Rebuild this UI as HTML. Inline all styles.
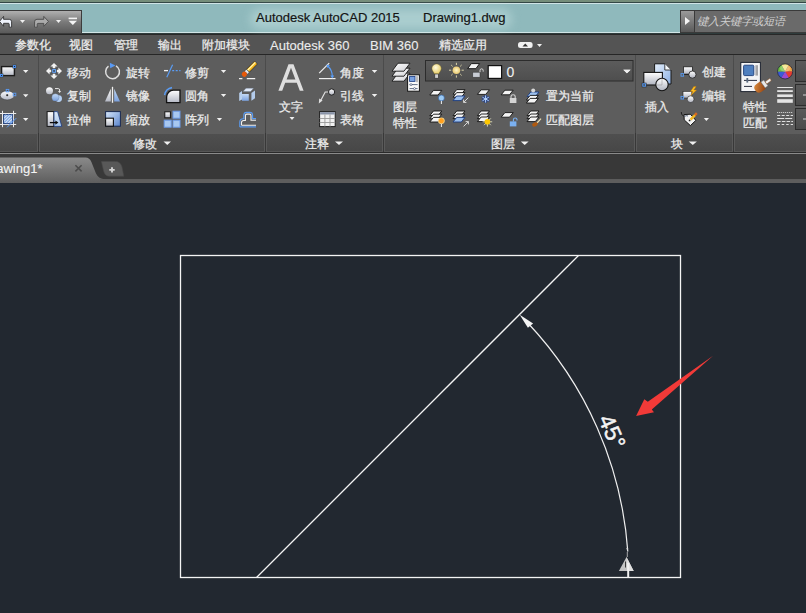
<!DOCTYPE html>
<html><head><meta charset="utf-8">
<style>
*{margin:0;padding:0;box-sizing:border-box}
html,body{width:806px;height:613px;overflow:hidden;background:#222830;font-family:"Liberation Sans",sans-serif}
.a{position:absolute}
.t{position:absolute;z-index:5;white-space:nowrap;color:#ececec;-webkit-text-stroke:0.25px currentColor;font-size:12px;line-height:14px}
#title{left:0;top:0;width:806px;height:35px;background:#8fb9bc}
#tabs{left:0;top:35px;width:806px;height:20px;background:#545454}
#panels{left:0;top:55px;width:806px;height:98px;background:#5d5d5d}
.strip{top:134px;height:18px;background:linear-gradient(#4f4f4f,#474747);border-left:1px solid #5a5a5a;border-right:1px solid #5a5a5a;border-bottom:1px solid #565656}
.sep{top:55px;width:1px;height:97px;background:linear-gradient(#4c4c4c,#444 80%,#383838 80%)}
.tri{position:absolute;width:0;height:0;border-left:3px solid transparent;border-right:3px solid transparent;border-top:3px solid #e0e0e0}
</style></head><body>
<!-- title bar -->
<div class="a" id="title"></div>
<div class="a" style="left:0;top:0;width:806px;height:2px;background:#758d7a"></div>
<div class="a" style="left:0;top:2px;width:806px;height:1px;background:#344745"></div>
<div class="a" style="left:0;top:3px;width:806px;height:1px;background:#d0e4e6"></div>
<div class="a" style="left:0;top:32px;width:806px;height:1px;background:#d2e5e6"></div>
<div class="a" style="left:0;top:33px;width:806px;height:1px;background:#2f3c3c"></div>
<div class="a" style="left:0;top:34px;width:806px;height:1px;background:#282828"></div>
<div class="a" style="left:250px;top:9px;width:262px;height:20px;border-radius:10px;background:rgba(205,230,230,0.45);filter:blur(5px)"></div>
<div class="t" style="left:256px;top:10px;font-size:13px;line-height:16px;color:#141414;-webkit-text-stroke:0.2px #141414">Autodesk AutoCAD 2015</div>
<div class="t" style="left:423px;top:10px;font-size:13px;line-height:16px;color:#141414;-webkit-text-stroke:0.2px #141414">Drawing1.dwg</div>

<!-- QAT -->
<div class="a" style="left:-1px;top:10px;width:83px;height:24px;border:1px solid #3c3c3c;background:linear-gradient(#b0b0b0,#7a7a7a 50%,#5a5a5a)"></div>

<!-- search -->
<div class="a" style="left:680px;top:10px;width:130px;height:23px;background:#3a3a3a"></div>
<div class="a" style="left:681px;top:11px;width:13px;height:21px;background:linear-gradient(#9a9a9a,#5a5a5a)"></div>
<div class="a" style="left:695px;top:11px;width:115px;height:21px;background:#6a6a6a"></div>
<div class="t" style="left:697px;top:14px;font-size:11.25px;font-style:italic;color:#cfcfcf;-webkit-text-stroke:0">键入关键字或短语</div>
<div class="a" style="left:685px;top:17px;width:0;height:0;border-top:4px solid transparent;border-bottom:4px solid transparent;border-left:5px solid #f4f4f4"></div>

<!-- ribbon tabs -->
<div class="a" id="tabs"></div>
<div class="a" style="left:0;top:54px;width:806px;height:1px;background:#262626"></div>
<div class="t" style="left:15px;top:38px">参数化</div>
<div class="t" style="left:69px;top:38px">视图</div>
<div class="t" style="left:114px;top:38px">管理</div>
<div class="t" style="left:158px;top:38px">输出</div>
<div class="t" style="left:202px;top:38px">附加模块</div>
<div class="t" style="left:270px;top:38px;font-size:13px;line-height:16px;-webkit-text-stroke:0.1px currentColor">Autodesk 360</div>
<div class="t" style="left:370px;top:38px;font-size:13px;line-height:16px;-webkit-text-stroke:0.1px currentColor">BIM 360</div>
<div class="t" style="left:439px;top:38px">精选应用</div>

<!-- panels -->
<div class="a" id="panels"></div>
<div class="a strip" style="left:-1px;width:39px"></div>
<div class="a strip" style="left:39px;width:226px"></div>
<div class="a strip" style="left:266px;width:117px"></div>
<div class="a strip" style="left:384px;width:251px"></div>
<div class="a strip" style="left:636px;width:97px"></div>
<div class="a strip" style="left:734px;width:76px"></div>

<div class="a" style="left:0;top:152px;width:806px;height:1px;background:#2a2a2a"></div>
<div class="a" style="left:0;top:153px;width:806px;height:1px;background:#8a8a8a"></div>
<div class="a sep" style="left:38px"></div>
<div class="a sep" style="left:265px"></div>
<div class="a sep" style="left:383px"></div>
<div class="a sep" style="left:635px"></div>
<div class="a sep" style="left:733px"></div>


<!-- panel labels -->
<div class="t" style="left:67px;top:66px">移动</div>
<div class="t" style="left:67px;top:89px">复制</div>
<div class="t" style="left:67px;top:113px">拉伸</div>
<div class="t" style="left:126px;top:66px">旋转</div>
<div class="t" style="left:126px;top:89px">镜像</div>
<div class="t" style="left:126px;top:113px">缩放</div>
<div class="t" style="left:185px;top:66px">修剪</div>
<div class="t" style="left:185px;top:89px">圆角</div>
<div class="t" style="left:185px;top:113px">阵列</div>
<div class="t" style="left:133px;top:137px">修改</div>
<div class="t" style="left:279px;top:100px">文字</div>
<div class="t" style="left:340px;top:66px">角度</div>
<div class="t" style="left:340px;top:89px">引线</div>
<div class="t" style="left:340px;top:113px">表格</div>
<div class="t" style="left:305px;top:137px">注释</div>
<div class="t" style="left:393px;top:100px">图层</div>
<div class="t" style="left:393px;top:116px">特性</div>
<div class="t" style="left:546px;top:89px">置为当前</div>
<div class="t" style="left:546px;top:113px">匹配图层</div>
<div class="t" style="left:491px;top:137px">图层</div>
<div class="t" style="left:645px;top:100px">插入</div>
<div class="t" style="left:702px;top:65px">创建</div>
<div class="t" style="left:702px;top:89px">编辑</div>
<div class="t" style="left:671px;top:137px">块</div>
<div class="t" style="left:743px;top:100px">特性</div>
<div class="t" style="left:743px;top:116px">匹配</div>
<svg class="a" style="left:0;top:0;z-index:4" width="320" height="100"><path fill-rule="evenodd" fill="#dedede" d="M288.5,64.2 H293.5 L303.6,90.8 H299.8 L296.8,82.8 H285.2 L282.2,90.8 H278.4 Z M291,67.8 L295.4,79.4 H286.6 Z"/></svg>

<div class="t" style="left:506.5px;top:63.5px;font-size:14px;line-height:16px;color:#f0f0f0;-webkit-text-stroke:0.1px currentColor">0</div>
<!-- doc tab bar -->
<div class="t" style="left:-17.5px;top:161px;font-size:13px;line-height:16px;color:#f4f4f4;-webkit-text-stroke:0.1px currentColor">Drawing1*</div>
<div class="a" style="left:0;top:154px;width:806px;height:29px;background:#383838"></div>

<!-- canvas -->
<svg class="a" style="left:0;top:183px" width="806" height="430" viewBox="0 183 806 430">
<rect x="180.5" y="255.5" width="500" height="322" fill="none" stroke="#f4f4f4" stroke-width="1.3"/>
<line x1="256.5" y1="577.5" x2="578.5" y2="255.5" stroke="#f4f4f4" stroke-width="1.3"/>
<path d="M526.9,322.0 A371.5,371.5 0 0 1 627.8,551.5" fill="none" stroke="#f0f0f0" stroke-width="1.2"/>
<polygon points="519.7,314.7 533.1,323.5 527.9,327.8" fill="#f4f4f4"/>
<polygon points="626.4,548 628.2,548 627.3,552" fill="#e0e0e0"/>
<path d="M627.3,552 V557" stroke="#c8c8c8" stroke-width="0.8"/>
<polygon points="626.5,557 633.7,571 618.9,571" fill="#c4c4c4"/><polygon points="626.5,557 633.7,571 627,571" fill="#e0e0e0"/>
<path d="M628.2,563 V577" stroke="#f0f0f0" stroke-width="2"/>
<path d="M625.5,561.5 V567.5" stroke="#3a3a3a" stroke-width="1"/>
<text x="0" y="0" transform="translate(598,419) rotate(66)" letter-spacing="0.4" font-family="Liberation Sans" font-size="22.5" stroke="#f4f4f4" stroke-width="0.5" transform-origin="0 0" fill="#f4f4f4">45°</text>
<polygon points="713.1,355.7 651.8,409.6 654,412.2 636.1,415.9 644.3,399.2 647.8,401.8" fill="#f23a38"/>
</svg>
<!--ICONS-->
<svg class="a" style="left:0;top:0" width="806" height="183" viewBox="0 0 806 183">
<defs>
<linearGradient id="mw" x1="0" y1="0" x2="0" y2="1"><stop offset="0" stop-color="#ffffff"/><stop offset="1" stop-color="#b0b4c0"/></linearGradient>
<linearGradient id="mb" x1="0" y1="0" x2="1" y2="1"><stop offset="0" stop-color="#e4eefa"/><stop offset="1" stop-color="#8cb0e4"/></linearGradient>
<linearGradient id="mbr" x1="0" y1="0" x2="1" y2="1"><stop offset="0" stop-color="#e09040"/><stop offset="1" stop-color="#904010"/></linearGradient>
<linearGradient id="mdd" x1="0" y1="0" x2="0" y2="1"><stop offset="0" stop-color="#5a5a5a"/><stop offset="1" stop-color="#4a4a4a"/></linearGradient>
</defs>
<!-- insert big -->
<path d="M654.6,63.8 H664.8 L671,70 V84 H654.6 Z" fill="url(#mb)" stroke="#181818" stroke-width="1"/>
<path d="M664.8,63.8 V70 H671" fill="#f4f8fc" stroke="#181818" stroke-width="0.8"/>
<rect x="643.8" y="72.4" width="18.6" height="12.6" fill="url(#mw)" stroke="#141414" stroke-width="1.1"/>
<circle cx="662" cy="84.5" r="6.2" fill="url(#mw)" stroke="#141414" stroke-width="1.1"/>
<path d="M662,78.6 V85 H656" stroke="#9a9aa0" stroke-width="0.6" fill="none"/>
<rect x="642" y="83" width="4.2" height="4" fill="#5a9cf4" stroke="#202020" stroke-width="0.5"/>
<rect x="643.4" y="84.3" width="1.4" height="1.4" fill="#3a3020"/>
<!-- create block -->
<rect x="683.4" y="66.8" width="9" height="7.4" fill="url(#mw)" stroke="#202020" stroke-width="0.8"/>
<circle cx="692.4" cy="74.6" r="3.6" fill="url(#mw)" stroke="#202020" stroke-width="0.8"/>
<path d="M683.4,74.4 H688.8" stroke="#202020" stroke-width="0.9"/>
<rect x="681" y="73.6" width="2.6" height="2.6" fill="none" stroke="#5a9cf4" stroke-width="0.9"/>
<!-- edit block -->
<rect x="683" y="91.4" width="8.8" height="6.6" fill="url(#mw)" stroke="#202020" stroke-width="0.6"/>
<circle cx="690.6" cy="99.2" r="3.4" fill="url(#mw)" stroke="#202020" stroke-width="0.6"/>
<rect x="681" y="96.4" width="2.6" height="2.6" fill="none" stroke="#5a9cf4" stroke-width="0.9"/>
<polygon points="693.8,86.6 690.4,91.6 692.8,91.6 690.8,95.6 696.6,90 693.8,90 696.2,86.6" fill="#ffc020" stroke="#c07000" stroke-width="0.4"/>
<!-- attribute -->
<path d="M681.3,112 Q681,115 683.6,116" stroke="#1a1a1a" stroke-width="0.9" fill="none"/>
<polygon points="684,114.6 690.4,114.2 695.9,120.4 690.4,125.6 684.2,119.9" fill="#f2f2f2" stroke="#141414" stroke-width="1"/>
<path d="M684.6,116.4 Q686,115.2 688,116" stroke="#3a4a6a" stroke-width="0.8" fill="none"/>
<circle cx="689.6" cy="120.4" r="0.9" fill="#222"/>
<path d="M690.6,119.6 L695.2,114.8" stroke="#f4b820" stroke-width="2.4"/>
<path d="M694.8,115.2 L696.8,113.2" stroke="#d86a20" stroke-width="2.4"/>
<!-- match properties -->
<rect x="740.8" y="62.4" width="19.6" height="29.2" fill="#f4f4f6" stroke="#1e2430" stroke-width="1"/>
<rect x="743.6" y="65.2" width="10.2" height="10.4" rx="1" fill="#4f7fbf" stroke="#1a3a78" stroke-width="0.9"/>
<rect x="755.4" y="65.2" width="2.6" height="10.4" fill="#a4a4a8"/>
<path d="M744,80.4 H757 M744,86.4 H752" stroke="#2a3040" stroke-width="1"/>
<rect x="746.4" y="78" width="1.8" height="4.6" fill="#5a6a80"/>
<g transform="translate(763,85) rotate(-36)">
<path d="M-9.5,0 Q-9.5,-4.6 -5,-4.6 H0 V4.6 H-5 Q-9.5,4.6 -9.5,0 Z" fill="url(#mbr)"/>
<rect x="0" y="-3.6" width="3.6" height="7.2" fill="#e8e8e8" stroke="#555" stroke-width="0.4"/>
<path d="M3.6,-1.4 H8.6 Q9.6,-1.4 9.6,0 Q9.6,1.4 8.6,1.4 H3.6 Z" fill="#f0f0f0" stroke="#8a5020" stroke-width="0.5"/>
</g>
<!-- color wheel -->
<g transform="translate(785.1,71.4)">
<path d="M0,0 L-3.80,-6.58 A7.6,7.6 0 0 1 3.80,-6.58 Z" fill="#f2e27a"/>
<path d="M0,0 L3.80,-6.58 A7.6,7.6 0 0 1 7.60,0.00 Z" fill="#f0a444"/>
<path d="M0,0 L7.60,0.00 A7.6,7.6 0 0 1 3.80,6.58 Z" fill="#e83a30"/>
<path d="M0,0 L3.80,6.58 A7.6,7.6 0 0 1 -3.80,6.58 Z" fill="#9a4ad0"/>
<path d="M0,0 L-3.80,6.58 A7.6,7.6 0 0 1 -7.60,0.00 Z" fill="#3a5ad8"/>
<path d="M0,0 L-7.60,0.00 A7.6,7.6 0 0 1 -3.80,-6.58 Z" fill="#6ec040"/>
<circle r="7.6" fill="none" stroke="#2a3040" stroke-width="0.9"/>
<ellipse cx="0" cy="-3" rx="5" ry="3.5" fill="#fff" opacity="0.25"/>
</g>
<!-- lineweight -->
<g fill="#e4e4e4">
<rect x="777.2" y="87" width="15.6" height="1"/>
<rect x="777.2" y="90.2" width="15.6" height="1.8"/>
<rect x="777.2" y="94.4" width="15.6" height="2.6"/>
<rect x="777.2" y="99.2" width="15.6" height="3.6"/>
</g>
<!-- linetype -->
<g stroke="#e0e0e0" stroke-width="1">
<path d="M777.2,112.5 H793" stroke-dasharray="1,1"/>
<path d="M777.2,115.5 H793" stroke-dasharray="3,1.5"/>
<path d="M777.2,118.5 H793" stroke-dasharray="7,1"/>
<path d="M777.2,121.5 H793" stroke-dasharray="3.5,1.2"/>
<path d="M777.2,124.5 H793" stroke-dasharray="2.5,2"/>
</g>
<!-- dropdowns -->
<rect x="795.5" y="60.5" width="14" height="21" fill="url(#mdd)" stroke="#2c2c2c"/>
<rect x="795.5" y="84.5" width="14" height="21" fill="url(#mdd)" stroke="#2c2c2c"/>
<rect x="795.5" y="108.5" width="14" height="21" fill="url(#mdd)" stroke="#2c2c2c"/>
<path d="M803,95 H806 M803,119 H806" stroke="#d0d0d0" stroke-width="1"/>
<!-- doc tabs -->
<path d="M-2,183 V160.4 Q-2,157.4 1,157.4 H85.6 Q89.6,157.4 91.4,162 L96,173.6 Q98.6,179.2 105,179.2 H806 V183 Z" fill="url(#gtab2)"/>
<linearGradient id="gtab2" x1="0" y1="0" x2="0" y2="1"><stop offset="0" stop-color="#8a8a8a"/><stop offset="1" stop-color="#5e5e5e"/></linearGradient>
<rect x="100" y="179.2" width="706" height="3.8" fill="#5e5e5e"/>
<path d="M101.4,161.4 H115.6 Q120.4,161.4 122,167 L123.8,176.2 H109 Q104.6,176.2 103.4,170 Z" fill="#585858" stroke="#4a4a4a" stroke-width="0.6"/>
<path d="M112,167.2 V172.6 M109.3,169.9 H114.7" stroke="#d4d4d4" stroke-width="1.9"/>
<path d="M75.4,165.2 L81.6,171.4 M81.6,165.2 L75.4,171.4" stroke="#4c4c4c" stroke-width="1.5"/>
</svg>

<svg class="a" style="left:0;top:0" width="806" height="183" viewBox="0 0 806 183">
<defs>
<linearGradient id="kw" x1="0" y1="0" x2="0" y2="1"><stop offset="0" stop-color="#ffffff"/><stop offset="1" stop-color="#b4b8c4"/></linearGradient>
<linearGradient id="kb" x1="0" y1="0" x2="0" y2="1"><stop offset="0" stop-color="#d4e4f8"/><stop offset="1" stop-color="#88acdf"/></linearGradient>
<linearGradient id="kcombo" x1="0" y1="0" x2="0" y2="1"><stop offset="0" stop-color="#5c5c5c"/><stop offset="1" stop-color="#4e4e4e"/></linearGradient>
<radialGradient id="ksun" cx="0.5" cy="0.5" r="0.5"><stop offset="0" stop-color="#fff6c8"/><stop offset="1" stop-color="#e8c870"/></radialGradient>
<radialGradient id="kbulb" cx="0.4" cy="0.35" r="0.6"><stop offset="0" stop-color="#fffbe0"/><stop offset="1" stop-color="#e8d070"/></radialGradient>
<polygon id="s1" points="3.7,0 12,0 8.3,4.6 0,4.6" fill="#f4f4f4" stroke="#121212" stroke-width="0.9"/>
<polygon id="s2" points="3.7,0 12,0 8.3,4.6 0,4.6" fill="#9cc0ee" stroke="#1a3a80" stroke-width="0.9"/>
</defs>
<!-- angle -->
<path d="M319,78.6 H335.5" stroke="#f0f0f0" stroke-width="1.2"/>
<path d="M319.2,73.2 L329.2,63.2" stroke="#f0f0f0" stroke-width="1.2"/>
<path d="M327.5,65.8 Q332.3,70 332.3,76.5" stroke="#5a9cf4" stroke-width="1.2" fill="none"/>
<polygon points="326.5,64.5 330,65.5 327.2,68" fill="#5a9cf4"/>
<polygon points="330.4,75.5 334.2,75.5 332.3,78.4" fill="#5a9cf4"/>
<!-- leader -->
<path d="M328.6,92 H325.2 L320.2,101.5" stroke="#e0e0e0" stroke-width="1.2" fill="none"/>
<polygon points="318.8,103.6 319.2,98.6 322.6,100.4" fill="#e0e0e0"/>
<circle cx="331.6" cy="92" r="3.1" fill="url(#kw)" stroke="#1a1a1a" stroke-width="0.9"/>
<!-- table -->
<rect x="319.6" y="111.6" width="15.6" height="15" fill="#f2f2f2" stroke="#1e1e1e" stroke-width="1"/>
<rect x="320.1" y="112.1" width="14.6" height="2.4" fill="#8a94a8"/>
<path d="M324.9,114.5 V126.6 M330,114.5 V126.6 M319.6,118.5 H335.2 M319.6,122.5 H335.2" stroke="#9a9a9a" stroke-width="0.9"/>
<!-- layer properties big -->
<linearGradient id="ksh" x1="0" y1="0" x2="1" y2="1"><stop offset="0" stop-color="#ffffff"/><stop offset="1" stop-color="#d0d0d4"/></linearGradient>
<polygon points="398,73.2 410,73.2 404,81.2 392,81.2" fill="url(#ksh)" stroke="#1a1a1a" stroke-width="0.9"/>
<polygon points="398,68.2 410,68.2 404,76.2 392,76.2" fill="url(#ksh)" stroke="#1a1a1a" stroke-width="0.9"/>
<polygon points="398,63.2 410,63.2 404,71.2 392,71.2" fill="url(#ksh)" stroke="#1a1a1a" stroke-width="0.9"/>
<rect x="407.6" y="74.8" width="11.8" height="16.4" fill="#fafafa" stroke="#151515" stroke-width="1"/>
<rect x="409.6" y="76.4" width="5.4" height="5" fill="#78a0e0" stroke="#1a3a80" stroke-width="0.8"/>
<rect x="416.2" y="76.2" width="1.6" height="6" fill="#a8a8a8"/>
<path d="M409.6,84.6 H417.6 M409.6,88.6 H417.6" stroke="#3a4a6a" stroke-width="0.8"/>
<circle cx="411" cy="84.6" r="1" fill="#fff" stroke="#3a4a6a" stroke-width="0.6"/>
<circle cx="414.5" cy="88.6" r="1" fill="#fff" stroke="#3a4a6a" stroke-width="0.6"/>
<!-- layer combo -->
<rect x="425.5" y="60.5" width="207.5" height="20.5" fill="url(#kcombo)" stroke="#2c2c2c" stroke-width="1"/>
<polygon points="623.3,69.8 630.6,69.8 626.95,73.2" fill="#f0f0f0"/>
<path d="M436.6,64 C439.4,64 441.3,66.2 441.3,68.6 C441.3,70.8 439.4,72 438.8,74 H434.4 C433.8,72 431.9,70.8 431.9,68.6 C431.9,66.2 433.8,64 436.6,64 Z" fill="url(#kbulb)" stroke="#6a5a20" stroke-width="0.4"/>
<rect x="434.8" y="74" width="3.6" height="4.2" fill="#d0d0d0" stroke="#2a2a2a" stroke-width="0.6"/>
<g stroke="#e8e0b0" stroke-width="0.9">
<path d="M456.4,62.8 V65 M456.4,75.4 V77.6 M449,70.2 H451.2 M461.6,70.2 H463.8 M451.2,65 L452.6,66.4 M460.2,74 L461.6,75.4 M461.6,65 L460.2,66.4 M452.6,74 L451.2,75.4"/>
</g>
<circle cx="456.4" cy="70.2" r="3.8" fill="url(#ksun)"/>
<use href="#s1" transform="translate(467.6,63.6) scale(1.0,1.1)"/>
<rect x="472.8" y="72.2" width="7.2" height="5" fill="#c8ccd4" stroke="#333" stroke-width="0.5"/>
<path d="M480,72.2 V70.6 Q480,68.8 481.6,68.8 Q483.2,68.8 483.2,70.6 V71.6" stroke="#d8d8d8" stroke-width="1" fill="none"/>
<rect x="488.2" y="65.6" width="13.4" height="12.8" fill="#ffffff" stroke="#111" stroke-width="1.2"/>
<!-- layer row 2 -->
<use href="#s1" transform="translate(429.8,90.4)"/>
<circle cx="441.4" cy="98" r="3" fill="#9ccaf4" stroke="#2a5aa0" stroke-width="0.6"/>
<path d="M441.4,101 V104" stroke="#f0f0f0" stroke-width="1"/>
<use href="#s1" transform="translate(453,89.6)"/>
<use href="#s1" transform="translate(453,92.6)"/>
<use href="#s2" transform="translate(453,96)"/>
<path d="M468.4,97.6 L463.6,102.4 M463.6,99.6 V102.4 H466.4" stroke="#d8d8d8" stroke-width="1" fill="none"/>
<use href="#s1" transform="translate(477.4,89.8)"/>
<g stroke="#24408a" stroke-width="2.4"><path d="M485.6,95 V103 M482,97 L489.2,101 M482,101 L489.2,97"/></g>
<g stroke="#b8d4f8" stroke-width="1"><path d="M485.6,95.4 V102.6 M482.4,97.2 L488.8,100.8 M482.4,100.8 L488.8,97.2"/></g>
<use href="#s1" transform="translate(501.2,90.2)"/>
<rect x="509.8" y="98" width="6.6" height="5" fill="#d4d4d4"/>
<path d="M511,98 V96.4 Q511,94.8 513.1,94.8 Q515.2,94.8 515.2,96.4 V98" stroke="#d4d4d4" stroke-width="1.1" fill="none"/>
<use href="#s2" transform="translate(527,92)"/>
<use href="#s1" transform="translate(526.4,95.4)"/>
<use href="#s1" transform="translate(526.4,98.4)"/>
<circle cx="533.2" cy="90.4" r="2" fill="#d8d8d8"/>
<!-- layer row 3 -->
<use href="#s1" transform="translate(429.8,111)"/>
<use href="#s1" transform="translate(429.8,114.2)"/>
<use href="#s1" transform="translate(429.8,117.4)"/>
<circle cx="441.4" cy="120.8" r="3" fill="#ffa020" stroke="#f0e0a0" stroke-width="0.8"/>
<path d="M441.4,123.8 V127" stroke="#f0f0f0" stroke-width="1"/>
<use href="#s1" transform="translate(453,111)"/>
<use href="#s1" transform="translate(453,114)"/>
<use href="#s2" transform="translate(453,117.4)"/>
<path d="M463.6,126.4 L468.4,121.6 M465.6,121.6 H468.4 V124.4" stroke="#d8d8d8" stroke-width="1" fill="none"/>
<use href="#s1" transform="translate(477.4,111)"/>
<use href="#s1" transform="translate(477.4,114)"/>
<use href="#s1" transform="translate(477.4,117)"/>
<g stroke="#f0f0d0" stroke-width="0.8"><path d="M487.4,117 V126.6 M482.6,121.8 H492.2 M484,118.4 L490.8,125.2 M490.8,118.4 L484,125.2"/></g>
<circle cx="487.4" cy="121.8" r="2.8" fill="#ffc800"/>
<use href="#s1" transform="translate(501.2,112.6)"/>
<rect x="509.8" y="121.4" width="6.6" height="5" fill="#7ab0f0"/>
<path d="M513.4,121.4 V119.6 Q513.4,118 515.2,118 Q517,118 517,119.6 V120.4" stroke="#7ab0f0" stroke-width="1.1" fill="none"/>
<use href="#s1" transform="translate(527,111)"/>
<use href="#s1" transform="translate(527,114)"/>
<use href="#s1" transform="translate(527,117)"/>
<path d="M537,123 L541,118.6" stroke="#f0e0b0" stroke-width="1.2"/>
<path d="M532,124.4 Q535,120.6 538,123.2 Q537,126.8 533,126.8 Z" fill="#b05a10"/>
</svg>

<svg class="a" style="left:0;top:0" width="806" height="183" viewBox="0 0 806 183">
<defs>
<linearGradient id="hw" x1="0" y1="0" x2="0" y2="1"><stop offset="0" stop-color="#ffffff"/><stop offset="1" stop-color="#b4b8c4"/></linearGradient>
<linearGradient id="hb" x1="0" y1="0" x2="0" y2="1"><stop offset="0" stop-color="#c4daf6"/><stop offset="1" stop-color="#7aa0dc"/></linearGradient>
<linearGradient id="hb2" x1="0" y1="0" x2="1" y2="1"><stop offset="0" stop-color="#d8e8fa"/><stop offset="1" stop-color="#5a84cc"/></linearGradient>
<linearGradient id="hor" x1="0" y1="0" x2="1" y2="1"><stop offset="0" stop-color="#ffe070"/><stop offset="1" stop-color="#d08010"/></linearGradient>
</defs>
<!-- left partial panel -->
<rect x="1.6" y="66.6" width="12.8" height="9" fill="url(#hw)" stroke="#1c1c1c" stroke-width="1.4"/>
<rect x="12.8" y="64.9" width="3.3" height="3.3" fill="#4a92f4" stroke="#3a3020" stroke-width="0.4"/>
<rect x="14" y="66.1" width="0.9" height="0.9" fill="#111"/>
<rect x="-0.2" y="73.8" width="3.3" height="3.3" fill="#4a92f4" stroke="#3a3020" stroke-width="0.4"/>
<rect x="1" y="75" width="0.9" height="0.9" fill="#111"/>
<ellipse cx="7.2" cy="95.4" rx="7" ry="4.5" fill="url(#hw)" stroke="#3a3a3a" stroke-width="0.5"/>
<path d="M6.2,95.2 h2 M7.2,94.2 v2" stroke="#111" stroke-width="0.9"/>
<rect x="6.2" y="89.4" width="2.6" height="2.4" fill="none" stroke="#5a9af4" stroke-width="0.9"/>
<rect x="13.2" y="93.2" width="2.6" height="2.6" fill="none" stroke="#5a9af4" stroke-width="0.9"/>
<path d="M2.5,110.8 V127.2 M13.5,110.8 V127.2 M0,113.5 H16.2 M0,124.5 H16.2" stroke="#ececec" stroke-width="1"/>
<rect x="3.6" y="114.6" width="9" height="9" fill="#dce6f4" stroke="#24407a" stroke-width="1"/>
<path d="M4.1,116.6 L6.1,114.6 M4.1,119.6 L9.1,114.6 M4.1,122.6 L12.1,114.6 M6.6,123.1 L12.1,117.6 M9.6,123.1 L12.1,120.6" stroke="#7aa4e4" stroke-width="1.2"/>
<path d="M7,127.4 L16.2,118.2" stroke="#5a9af4" stroke-width="1"/>
<!-- move -->
<g fill="#f2f2f2">
<polygon points="54,63 57.6,66.6 55.3,66.6 55.3,68.4 52.7,68.4 52.7,66.6 50.4,66.6"/>
<polygon points="54,79 57.6,75.4 55.3,75.4 55.3,73.6 52.7,73.6 52.7,75.4 50.4,75.4"/>
<polygon points="46,71 49.6,67.4 49.6,69.7 51.4,69.7 51.4,72.3 49.6,72.3 49.6,74.6"/>
<polygon points="62,71 58.4,67.4 58.4,69.7 56.6,69.7 56.6,72.3 58.4,72.3 58.4,74.6"/>
</g>
<rect x="51.9" y="68.8" width="4.3" height="4.3" fill="#6aa8f8" stroke="#2a2a2a" stroke-width="0.5"/>
<rect x="53.3" y="70.2" width="1.5" height="1.5" fill="#2a2a2a"/>
<!-- copy -->
<circle cx="49.5" cy="90.8" r="3.5" fill="url(#hw)"/>
<circle cx="58.6" cy="98.6" r="3.4" fill="#b4d0f4"/>
<circle cx="55.4" cy="97.4" r="3.6" fill="url(#hb)" stroke="#5a6a8a" stroke-width="0.3"/>
<path d="M55,88.6 H58.3 Q59.6,88.6 59.6,90 V91" stroke="#e8e8e8" stroke-width="1" fill="none"/>
<polygon points="58,91 61.2,91 59.6,93" fill="#e8e8e8"/>
<!-- stretch -->
<linearGradient id="hst" x1="0" y1="0" x2="0" y2="1"><stop offset="0" stop-color="#dce9f8"/><stop offset="1" stop-color="#a4c4ec"/></linearGradient>
<rect x="47.1" y="111.6" width="6.8" height="14.8" fill="url(#hw)" stroke="#151515" stroke-width="1"/>
<polygon points="54,111.6 57.6,111.6 61.8,126.4 54,126.4" fill="url(#hst)" stroke="#1a3a80" stroke-width="0.8"/>
<path d="M49.8,122.6 H56" stroke="#0a0a0a" stroke-width="1.3"/>
<polygon points="55.4,120.4 58.4,122.6 55.4,124.8" fill="#0a0a0a"/>
<!-- rotate -->
<path d="M116,65.8 A6.9,6.9 0 1 1 108.5,66.2" fill="none" stroke="#dedede" stroke-width="1.5"/>
<polygon points="109.8,62.8 115.4,65.4 110.2,68.2" fill="#5a9af4"/>
<!-- mirror -->
<path d="M112.5,86.8 V102.8" stroke="#f0f0f0" stroke-width="1.3"/>
<polygon points="110.8,88.8 110.8,101.6 105,101.6" fill="url(#hw)"/>
<polygon points="114.2,88.8 114.2,101.6 120,101.6" fill="url(#hb)"/>
<!-- scale -->
<rect x="105.6" y="111.6" width="14.8" height="14.6" fill="url(#hb2)" stroke="#1a2a50" stroke-width="1"/>
<rect x="105.6" y="118.2" width="7.8" height="8" fill="url(#hw)" stroke="#111" stroke-width="1.1"/>
<!-- trim -->
<path d="M164,70.6 H168" stroke="#f0f0f0" stroke-width="1.3"/>
<path d="M166.8,77.2 L172.6,64.8" stroke="#5a9cf4" stroke-width="1.2"/>
<path d="M172.2,70.6 H180.5" stroke="#5a9cf4" stroke-width="1.2" stroke-dasharray="2,1.5"/>
<!-- fillet -->
<path d="M164.6,95.2 A8.5,8.5 0 0 1 172,87.6" stroke="#5a9cf4" stroke-width="1.6" fill="none"/>
<path d="M166.6,102.6 V97 A6.8,6.8 0 0 1 173.4,90.2 H180 V102.6 Z" fill="url(#hw)" stroke="#121212" stroke-width="1.3"/>
<!-- array -->
<rect x="164.8" y="111.8" width="5.6" height="6" fill="url(#hw)" stroke="#151515" stroke-width="1"/>
<rect x="173" y="111.2" width="7" height="7" fill="#a8c8f0" stroke="#6a9ae8" stroke-width="1"/>
<rect x="164.2" y="120.2" width="7" height="7" fill="#a8c8f0" stroke="#6a9ae8" stroke-width="1"/>
<rect x="173" y="120.2" width="7" height="7" fill="#a8c8f0" stroke="#6a9ae8" stroke-width="1"/>
<!-- erase -->
<g transform="translate(246.2,72.4) rotate(-45)">
<rect x="1.8" y="-2.2" width="12.2" height="4.4" fill="#2a2a2a"/>
<rect x="2.4" y="-1.7" width="11.2" height="3.4" fill="#f4b418"/>
<rect x="2.4" y="-1.2" width="11.2" height="1.3" fill="#fff4b0"/>
<rect x="-0.4" y="-2.1" width="2.8" height="4.2" fill="#e4e8ee" stroke="#2a2a2a" stroke-width="0.5"/>
<circle cx="-2.6" cy="0" r="2.6" fill="#e85a0a"/>
</g>
<path d="M239,78.6 H242.4 M246.8,78.6 H255.2" stroke="#f4f4f4" stroke-width="1.1"/>
<!-- explode -->
<polygon points="239.2,93 242,91 242,99.4 239.2,101" fill="#b8d0ee"/>
<polygon points="246,88.2 253.6,88.2 250.6,91.6 243,91.6" fill="#dfe9f8" stroke="#5a6a80" stroke-width="0.3"/>
<rect x="242" y="94" width="6.8" height="6.8" fill="url(#hb)"/>
<polygon points="251.4,93 255,90.4 255,98.2 251.4,100.8" fill="#b4ccec"/>
<!-- offset -->
<path d="M239.8,126.9 V122.2 Q239.8,118.8 243.2,118.8 H243.8 V115.2 Q243.8,112.4 246.6,112.4 H249.8 Q252.6,112.4 252.6,115.2 V118.6 H256 M239.8,126.9 H256" fill="none" stroke="#5a9cf4" stroke-width="1.1"/>
<path d="M241.5,125.3 V122.6 Q241.5,120.5 243.6,120.5 H245.4 V115.6 Q245.4,114.1 246.9,114.1 H249.5 Q251,114.1 251,115.6 V120.3 H256 M241.5,125.3 H256" fill="none" stroke="#f2f2f2" stroke-width="1.1"/>
</svg>

<svg class="a" style="left:0;top:0" width="806" height="183" viewBox="0 0 806 183">
<defs>
<linearGradient id="gw" x1="0" y1="0" x2="0" y2="1"><stop offset="0" stop-color="#ffffff"/><stop offset="1" stop-color="#b8bcc8"/></linearGradient>
<linearGradient id="gb" x1="0" y1="0" x2="0" y2="1"><stop offset="0" stop-color="#c8dcf4"/><stop offset="1" stop-color="#6890d0"/></linearGradient>
<linearGradient id="gq" x1="0" y1="0" x2="0" y2="1"><stop offset="0" stop-color="#a4a4a4"/><stop offset="0.45" stop-color="#808080"/><stop offset="1" stop-color="#5a5a5a"/></linearGradient>
<linearGradient id="gtab" x1="0" y1="0" x2="0" y2="1"><stop offset="0" stop-color="#8c8c8c"/><stop offset="1" stop-color="#5e5e5e"/></linearGradient>
<linearGradient id="gcombo" x1="0" y1="0" x2="0" y2="1"><stop offset="0" stop-color="#5e5e5e"/><stop offset="1" stop-color="#4a4a4a"/></linearGradient>
<polygon id="sh" points="3.7,0 12,0 8.3,4.8 0,4.8" fill="#f2f2f2" stroke="#161616" stroke-width="0.9"/>
<polygon id="shb" points="3.7,0 12,0 8.3,4.8 0,4.8" fill="#8ab4ec" stroke="#1a3a80" stroke-width="0.9"/>
</defs>
<g fill="#f0f0f0">
<!-- dropdown triangles -->
<polygon points="23,70 28.4,70 25.7,73"/>
<polygon points="23,94.2 28.4,94.2 25.7,97.2"/>
<polygon points="23,118 28.4,118 25.7,121"/>
<polygon points="220.9,94 226.2,94 223.55,97"/>
<polygon points="220.9,70 226.2,70 223.55,73"/>
<polygon points="216.8,118 222.1,118 219.45,121"/>
<polygon points="163.5,141.5 171,141.5 167.25,145"/>
<polygon points="335,141.5 343,141.5 339,145"/>
<polygon points="371.8,70 377.3,70 374.55,73"/>
<polygon points="371.8,94 377.3,94 374.55,97"/>
<polygon points="289.5,117 294.5,117 292,120"/>
<polygon points="520.8,141.5 528.6,141.5 524.7,145"/>
<polygon points="688.7,141.5 696.9,141.5 692.8,145"/>
<polygon points="703.8,118 709,118 706.4,121"/>
<polygon points="623.3,69.8 630.6,69.8 626.95,73.2"/>
<polygon points="20,20 25,20 22.5,23"/>
<polygon points="56,20 61,20 58.5,23"/>
<polygon points="537,44 542,44 539.5,47"/>
</g>
<!-- QAT icons -->
<path d="M-0.5,21.4 L3.6,16.4 V19.3 H9.2 Q11.6,19.3 11.6,21.7 V27.2 H9.2 V24.2 Q9.2,23.3 8.3,23.3 H3.6 V26.3 Z" fill="#eef2fa" stroke="#333" stroke-width="0.9"/>
<path d="M48.4,21.4 L43.8,16.4 V19.3 H37 Q34.6,19.3 34.6,21.7 V27.2 H37.2 V24.2 Q37.2,23.4 38,23.4 H43.8 V26.4 Z" fill="#ababab" stroke="#4a4a4a" stroke-width="0.9"/>
<rect x="68.6" y="17.6" width="8.4" height="1.6" fill="#f4f4f4"/>
<polygon points="68.6,20.8 77,20.8 72.8,25" fill="#f4f4f4"/>
<!-- tab row icon -->
<rect x="518" y="42" width="14.6" height="6" rx="2.5" fill="#f0f0f0"/>
<polygon points="522.5,46.5 528,46.5 525.25,43.5" fill="#333"/>
</svg>

</body></html>
